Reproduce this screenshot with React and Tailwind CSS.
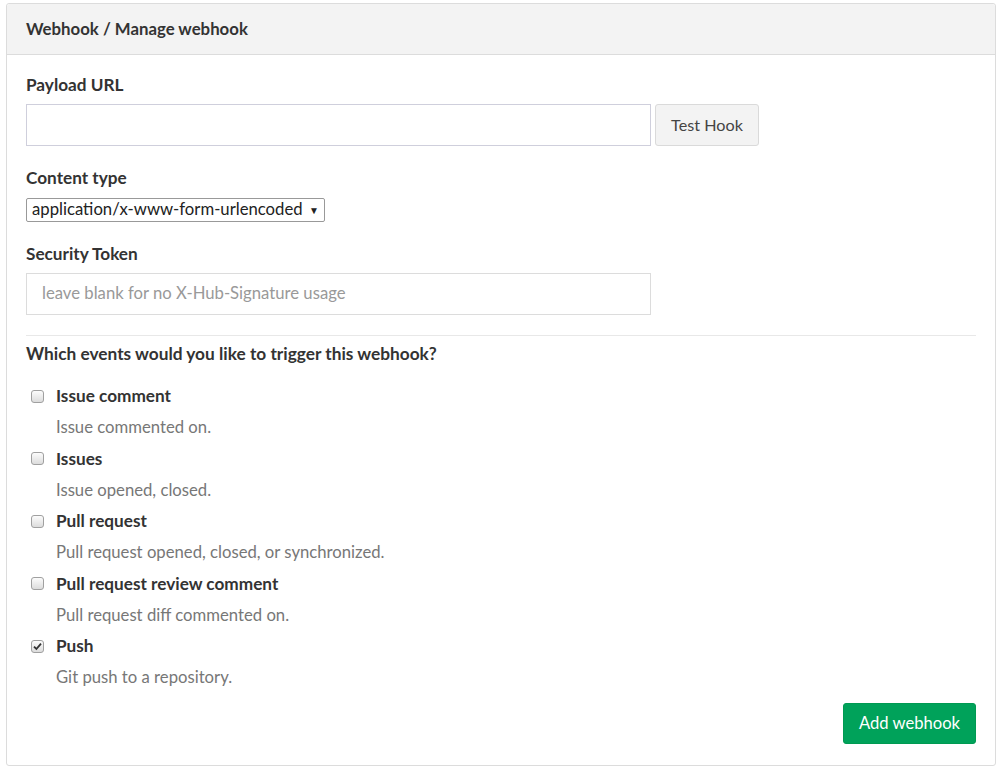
import React from "react";

const events = [
  { name: "Issue comment", desc: "Issue commented on.", checked: false },
  { name: "Issues", desc: "Issue opened, closed.", checked: false },
  { name: "Pull request", desc: "Pull request opened, closed, or synchronized.", checked: false },
  { name: "Pull request review comment", desc: "Pull request diff commented on.", checked: false },
  { name: "Push", desc: "Git push to a repository.", checked: true },
];

function Box({ checked }) {
  return (
    <span className="w-[13px] h-[13px] rounded-[3px] border border-[#a0a0a0] bg-gradient-to-b from-[#fcfcfc] to-[#dcdcdc] flex items-center justify-center shrink-0">
      {checked && (
        <svg width="9" height="9" viewBox="0 0 9 9">
          <path d="M1 4.6 L3.4 7 L8 1.6" fill="none" stroke="#333" strokeWidth="1.8" />
        </svg>
      )}
    </span>
  );
}

export default function App() {
  return (
    <div className="w-[1003px] h-[774px] bg-white pt-[3px] pl-[6px] text-[#333] text-[16.7px]" style={{ fontFamily: "Lato, 'Liberation Sans', sans-serif" }}>
      <div className="w-[990px] h-[763px] border border-[#dcdcdc] rounded-[3px] flex flex-col">
        <div className="h-[51px] bg-[#f3f3f3] border-b border-[#dcdcdc] flex items-center px-[19px] font-bold text-[16.8px] text-[#333] rounded-t-[3px]">
          <span className="-mt-[1px]">Webhook / Manage webhook</span>
        </div>
        <div className="px-[19px] pt-[19px] flex flex-col">
          <div className="font-bold h-[22px] leading-[22px] text-[17.2px]">Payload URL</div>
          <div className="flex gap-[4px] mt-[8px]">
            <div className="w-[625px] h-[42px] border border-[#cfcfdc] bg-white" />
            <div className="w-[104px] h-[42px] border border-[#dadada] bg-[#f3f3f3] rounded-[3px] flex items-center justify-center text-[#444] text-[16.2px]">Test Hook</div>
          </div>
          <div className="font-bold h-[22px] leading-[22px] mt-[21px] text-[17.2px]">Content type</div>
          <div className="mt-[9px] w-[299px] h-[24px] border border-[#999] rounded-[2px] flex items-center px-[5px] text-[#222]">
            <span>application/x-www-form-urlencoded</span>
            <span className="ml-auto text-[10px]">▼</span>
          </div>
          <div className="font-bold h-[22px] leading-[22px] mt-[21px] text-[17.2px]">Security Token</div>
          <div className="mt-[8px] w-[625px] h-[42px] border border-[#dcdcdc] flex items-center px-[15px] text-[#999]">
            leave blank for no X-Hub-Signature usage
          </div>
          <div className="mt-[20px] h-px bg-[#e8e8e8]" />
          <div className="font-bold h-[22px] leading-[22px] mt-[7px] text-[17.3px]">Which events would you like to trigger this webhook?</div>
          <div className="mt-[20px] flex flex-col">
            {events.map((e) => (
              <div key={e.name} className="h-[62.5px]">
                <div className="flex items-center h-[22px] pl-[5px]">
                  <Box checked={e.checked} />
                  <span className="ml-[12px] font-bold text-[17.2px]">{e.name}</span>
                </div>
                <div className="pl-[30px] mt-[9px] h-[22px] leading-[22px] text-[#777]">{e.desc}</div>
              </div>
            ))}
          </div>
          <div className="flex justify-end mt-[5px]">
            <div className="w-[133px] h-[41px] bg-[#00a25a] border border-[#009a52] rounded-[3px] text-white flex items-center justify-center text-[16.6px]">Add webhook</div>
          </div>
        </div>
      </div>
    </div>
  );
}
